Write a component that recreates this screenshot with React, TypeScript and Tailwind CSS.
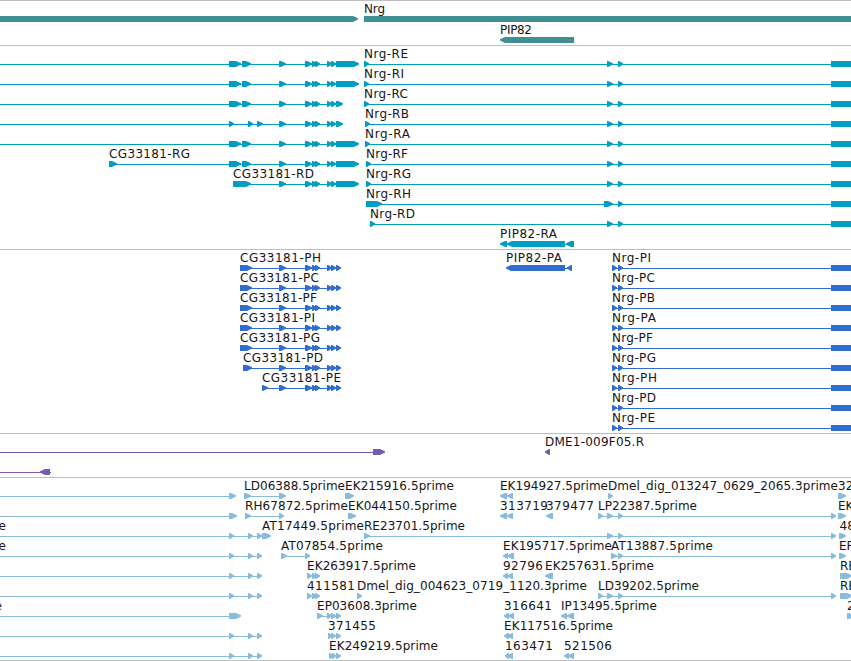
import React from "react";

// [start, end] in canvas pixels; a third entry gives the arrow direction.
type Exon = [number, number, ("l" | "b")?];

interface Feature {
  row: number;
  exons: Exon[];
  line?: [number, number];
  label?: string;
  // Left edge and right edge of the label.
  span?: [number, number];
}

interface TrackProps {
  name: string;
  height: string;
  color: string;
  features: Feature[];
  pitch?: number;
}

const HEAD = 6;

function Glyph({ exon, y }: { exon: Exon; y: number }) {
  const [a, b, kind] = exon;
  const h = Math.min(HEAD, b - a) - 1;
  if (kind === "b") return <rect x={a} y={y} width={b - a} height={6} />;
  const points =
    kind === "l"
      ? `${b},${y} ${a + h},${y} ${a},${y + 2.2} ${a},${y + 3.6} ${a + h},${y + 6} ${b},${y + 6}`
      : `${a},${y} ${b - h},${y} ${b},${y + 2.2} ${b},${y + 3.6} ${b - h},${y + 6} ${a},${y + 6}`;
  return <polygon points={points} />;
}

function Track({ name, height, color, features, pitch = 20 }: TrackProps) {
  return (
    <section aria-label={name} className={`w-full overflow-hidden border-t border-[#bebebe] ${height} ${color}`}>
      <svg width="851" height="100%" className="block overflow-hidden" fill="currentColor">
        {features.map((f, i) => {
          const y = 15 + f.row * pitch;
          return (
            <g key={i}>
              {f.line && <rect x={f.line[0]} y={y + 3} width={f.line[1] - f.line[0]} height={1} />}
              {f.exons.map((e, j) => (
                <Glyph key={j} exon={e} y={y} />
              ))}
              {f.label && f.span && (
                <text
                  x={f.span[0]}
                  y={y - 3}
                  textLength={f.label.length > 2 ? f.span[1] - f.span[0] : undefined}
                  className="fill-[#161616] text-[12px]"
                >
                  {f.label}
                </text>
              )}
            </g>
          );
        })}
      </svg>
    </section>
  );
}

const genes: Feature[] = [
  { row: 0, exons: [[-10, 358]] },
  { row: 0, exons: [[364, 851, "b"]], label: "Nrg", span: [364, 385] },
  { row: 1, exons: [[500, 574, "l"]], label: "PIP82", span: [500, 532] },
];

const middle: Exon[] = [[279, 286], [305, 312], [312, 317], [315, 320], [327, 332], [331, 336]];
const wide: Exon[] = [[229, 241], [242, 251], ...middle];
const longEnd: Exon = [336, 359];
const shortEnd: Exon = [336, 343];

const nrgTranscripts: [string, number, number][] = [
  ["Nrg-RE", 364, 408],
  ["Nrg-RI", 364, 404],
  ["Nrg-RC", 364, 408],
  ["Nrg-RB", 365, 409],
  ["Nrg-RA", 365, 410],
  ["Nrg-RF", 366, 408],
  ["Nrg-RG", 366, 411],
  ["Nrg-RH", 366, 411],
  ["Nrg-RD", 370, 415],
];

const transcripts: Feature[] = [
  { row: 0, line: [0, 340], exons: [...wide, longEnd] },
  { row: 1, line: [0, 340], exons: [...wide, longEnd] },
  { row: 2, line: [0, 340], exons: [...wide, shortEnd] },
  { row: 3, line: [0, 340], exons: [[229, 234], [248, 253], [257, 263], ...middle, shortEnd] },
  { row: 4, line: [0, 340], exons: [...wide, longEnd] },
  { row: 5, line: [109, 340], exons: [[109, 117], ...wide, longEnd], label: "CG33181-RG", span: [109, 190] },
  { row: 6, line: [233, 340], exons: [[233, 251], ...middle, longEnd], label: "CG33181-RD", span: [233, 314] },
  ...nrgTranscripts.map(([label, a, b], row): Feature => ({
    row,
    line: [a, 851],
    exons: [
      label === "Nrg-RH" ? [a, 382] : [a, a + 5],
      label === "Nrg-RH" ? [604, 613] : [607, 613],
      [618, 623],
      [831, 851, "b"],
    ],
    label,
    span: [a, b],
  })),
  {
    row: 9,
    line: [502, 570],
    exons: [[500, 507, "l"], [507, 565, "l"], [566, 574, "l"]],
    label: "PIP82-RA",
    span: [500, 557],
  },
];

const proteinEnds: Exon[] = [...middle, [336, 341]];
const nrgProteins: [string, number][] = [
  ["Nrg-PI", 651],
  ["Nrg-PC", 655],
  ["Nrg-PB", 655],
  ["Nrg-PA", 656],
  ["Nrg-PF", 653],
  ["Nrg-PG", 656],
  ["Nrg-PH", 657],
  ["Nrg-PD", 656],
  ["Nrg-PE", 655],
];
const cgProteins: [string, number, number][] = [
  ["CG33181-PH", 240, 321],
  ["CG33181-PC", 240, 319],
  ["CG33181-PF", 240, 317],
  ["CG33181-PI", 240, 315],
  ["CG33181-PG", 240, 320],
  ["CG33181-PD", 243, 323],
  ["CG33181-PE", 262, 341],
];

const proteins: Feature[] = [
  ...cgProteins.map(([label, a, b], row): Feature => ({
    row,
    line: [a, 338],
    exons: [...((a === 240 ? [[240, 249], [243, 252]] : a === 243 ? [[243, 252]] : [[262, 268]]) as Exon[]), ...proteinEnds],
    label,
    span: [a, b],
  })),
  { row: 0, line: [508, 570], exons: [[506, 565, "l"], [567, 572, "l"]], label: "PIP82-PA", span: [506, 562] },
  ...nrgProteins.map(([label, b], row): Feature => ({
    row,
    line: [612, 851],
    exons: [[612, 617], [618, 623], [831, 851, "b"]],
    label,
    span: [612, b],
  })),
];

const bacEnds: Feature[] = [
  { row: 0, line: [0, 380], exons: [[373, 385]] },
  { row: 1, line: [0, 51], exons: [[40, 50, "l"]] },
  { row: 0, exons: [[545, 550, "l"]], label: "DME1-009F05.R", span: [545, 644] },
];

const triple: Exon[] = [[229, 234], [248, 253], [257, 262]];
const tailTriple: Exon[] = [[327, 332], [331, 336], [336, 341]];

const ests: Feature[] = [
  { row: 0, line: [0, 230], exons: [[229, 236]] },
  { row: 0, line: [244, 284], exons: [[244, 251], [279, 286]], label: "LD06388.5prime", span: [244, 345] },
  { row: 0, exons: [[345, 354]], label: "EK215916.5prime", span: [345, 454] },
  { row: 0, exons: [[500, 507, "l"], [507, 513, "l"]], label: "EK194927.5prime", span: [500, 608] },
  { row: 0, exons: [[608, 613]], label: "Dmel_dig_013247_0629_2065.3prime", span: [608, 838] },
  { row: 0, exons: [[838, 846]], label: "32", span: [838, 854] },

  { row: 1, line: [0, 230], exons: [[229, 237]] },
  { row: 1, line: [245, 282], exons: [[245, 251], [279, 284]], label: "RH67872.5prime", span: [245, 348] },
  { row: 1, exons: [[348, 356]], label: "EK044150.5prime", span: [348, 457] },
  { row: 1, exons: [[500, 507, "l"], [507, 513, "l"]], label: "313719", span: [500, 548] },
  { row: 1, exons: [[546, 553, "l"]], label: "379477", span: [546, 594] },
  {
    row: 1,
    line: [598, 834],
    exons: [[598, 603], [607, 613], [618, 623], [831, 836]],
    label: "LP22387.5prime",
    span: [598, 697],
  },
  { row: 1, exons: [[838, 846]], label: "EK", span: [838, 854] },

  { row: 2, line: [0, 268], exons: [...triple, [262, 271]], label: "e", span: [-1.5, 6] },
  { row: 2, exons: [], label: "AT17449.5prime", span: [262, 364] },
  {
    row: 2,
    line: [364, 834],
    exons: [[364, 370], [607, 613], [618, 623], [831, 836]],
    label: "RE23701.5prime",
    span: [364, 465],
  },
  { row: 2, exons: [[839, 846]], label: "48", span: [839.5, 856] },

  { row: 3, line: [0, 260], exons: triple, label: "e", span: [-1.5, 6] },
  { row: 3, line: [281, 308], exons: [[281, 287], [305, 310]], label: "AT07854.5prime", span: [281, 383] },
  { row: 3, exons: [[503, 508, "l"], [507, 514, "l"]], label: "EK195717.5prime", span: [503, 612] },
  {
    row: 3,
    line: [612, 834],
    exons: [[611, 617], [618, 623], [831, 836]],
    label: "AT13887.5prime",
    span: [611, 713],
  },
  { row: 3, exons: [[839, 846]], label: "EP", span: [839, 854] },

  { row: 4, line: [0, 260], exons: triple },
  { row: 4, exons: [[307, 312], [312, 317], [315, 320]], label: "EK263917.5prime", span: [307, 416] },
  { row: 4, exons: [[503, 508, "l"], [507, 513, "l"]], label: "92796", span: [503, 543] },
  { row: 4, exons: [[545, 553, "l"]], label: "EK257631.5prime", span: [545, 654] },
  { row: 4, exons: [[840, 852]], label: "RE", span: [840, 856] },

  { row: 5, line: [0, 260], exons: triple },
  { row: 5, exons: [[307, 312], [312, 317], [315, 320]], label: "411581", span: [307, 355] },
  { row: 5, exons: [[357, 362]], label: "Dmel_dig_004623_0719_1120.3prime", span: [357, 587] },
  {
    row: 5,
    line: [598, 834],
    exons: [[598, 603], [607, 613], [618, 623], [831, 836]],
    label: "LD39202.5prime",
    span: [598, 699],
  },
  { row: 5, exons: [[840, 852]], label: "RE", span: [840, 856] },

  { row: 6, line: [0, 232], exons: [[229, 241]], label: "e", span: [-5.5, 2] },
  { row: 6, line: [317, 338], exons: [[317, 323], ...tailTriple], label: "EP03608.3prime", span: [317, 417] },
  { row: 6, exons: [[504, 509, "l"], [508, 514, "l"]], label: "316641", span: [504, 552] },
  { row: 6, line: [563, 570], exons: [[561, 567, "l"], [567, 574, "l"]], label: "IP13495.5prime", span: [561, 657] },
  { row: 6, exons: [[847, 854]], label: "2", span: [847, 854] },

  { row: 7, line: [0, 260], exons: triple },
  { row: 7, exons: [[328, 332], [331, 336], [336, 341]], label: "371455", span: [328, 376] },
  { row: 7, exons: [[504, 509, "l"], [507, 513, "l"]], label: "EK117516.5prime", span: [504, 613] },

  { row: 8, line: [0, 260], exons: triple },
  { row: 8, exons: [[329, 334], [332, 336], [336, 341]], label: "EK249219.5prime", span: [329, 438] },
  { row: 8, exons: [[505, 509, "l"], [507, 513, "l"]], label: "163471", span: [505, 553] },
  { row: 8, exons: [[564, 569, "l"], [568, 574, "l"]], label: "521506", span: [564, 612] },
];

export default function App() {
  return (
    <main className="flex h-[661px] w-[851px] flex-col overflow-hidden border-b border-[#bebebe] bg-white font-['DejaVu_Sans',sans-serif]">
      <Track name="Genes" height="h-[45px]" color="text-[#3f8f94]" features={genes} pitch={21} />
      <Track name="Transcripts" height="h-[204px]" color="text-[#009fc1]" features={transcripts} />
      <Track name="Proteins" height="h-[184px]" color="text-[#316dce]" features={proteins} />
      <Track name="BAC ends" height="h-[44px]" color="text-[#7859ab]" features={bacEnds} />
      <Track name="ESTs" height="h-[183px]" color="text-[#88bcdf]" features={ests} />
    </main>
  );
}
